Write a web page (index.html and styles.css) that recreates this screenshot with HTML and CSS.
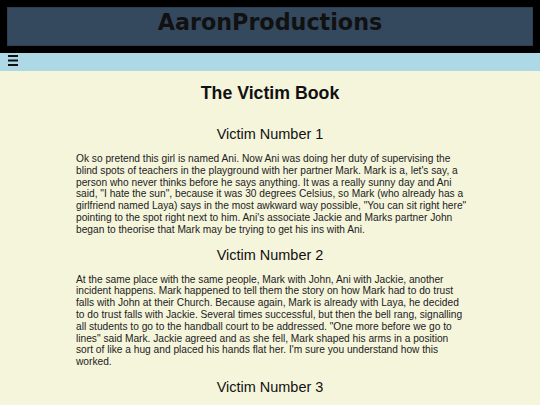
FILE: index.html
```html
<!DOCTYPE html>
<html>
<head>
<meta charset="utf-8">
<link rel="stylesheet" href="styles.css">
</head>
<body>
<header class="top">
  <div class="brand-box"><span class="brand">AaronProductions</span></div>
</header>
<nav class="nav">
  <svg class="burger" width="10" height="11" viewBox="0 0 10 11" aria-label="menu">
    <rect x="0" y="0" width="10" height="2" fill="#111"/>
    <rect x="0" y="4.5" width="10" height="2" fill="#111"/>
    <rect x="0" y="9" width="10" height="2" fill="#111"/>
  </svg>
</nav>
<main class="content">
  <h1 class="title">The Victim Book</h1>
  <h2 class="chapter">Victim Number 1</h2>
  <p class="story">Ok so pretend this girl is named Ani. Now Ani was doing her duty of supervising the blind spots of teachers in the playground with her partner Mark. Mark is a, let's say, a person who never thinks before he says anything. It was a really sunny day and Ani said, "I hate the sun", because it was 30 degrees Celsius, so Mark (who already has a girlfriend named Laya) says in the most awkward way possible, "You can sit right here" pointing to the spot right next to him. Ani's associate Jackie and Marks partner John began to theorise that Mark may be trying to get his ins with Ani.</p>
  <h2 class="chapter">Victim Number 2</h2>
  <p class="story">At the same place with the same people, Mark with John, Ani with Jackie, another incident happens. Mark happened to tell them the story on how Mark had to do trust falls with John at their Church. Because again, Mark is already with Laya, he decided to do trust falls with Jackie. Several times successful, but then the bell rang, signalling all students to go to the handball court to be addressed. "One more before we go to lines" said Mark. Jackie agreed and as she fell, Mark shaped his arms in a position sort of like a hug and placed his hands flat her. I'm sure you understand how this worked.</p>
  <h2 class="chapter">Victim Number 3</h2>
</main>
</body>
</html>
```
FILE: styles.css
```css
html, body {
  margin: 0;
  padding: 0;
  background: #f5f5dc;
  height: 100%;
  overflow: hidden;
}
body {
  font-family: "Liberation Sans", Arial, sans-serif;
  color: #111;
}
.top {
  background: #000;
  padding: 7px;
}
.brand-box {
  background: #34495e;
  border: 1px solid #2c3e50;
  height: 37px;
  display: flex;
  align-items: center;
  justify-content: center;
}
.brand {
  font-family: "DejaVu Sans", Verdana, sans-serif;
  font-weight: bold;
  font-size: 22.25px;
  color: #111;
  line-height: 1;
  margin-top: -8px;
}
.nav {
  background: #add8e6;
  height: 18px;
  display: flex;
  align-items: flex-start;
  padding-left: 8px;
}
.burger {
  display: block;
  margin-top: 2px;
}
.content {
  padding-top: 1px;
}
.title {
  text-align: center;
  font-size: 17.73px;
  font-weight: bold;
  line-height: 20px;
  margin: 11px 0 23px;
}
.chapter {
  text-align: center;
  font-size: 14.47px;
  font-weight: normal;
  line-height: 16px;
  margin: 11px 0;
}
.story {
  width: 391.6px;
  margin: 10px 0 10px 76px;
  font-size: 10.2px;
  line-height: 11.8px;
  color: #222;
}
```
